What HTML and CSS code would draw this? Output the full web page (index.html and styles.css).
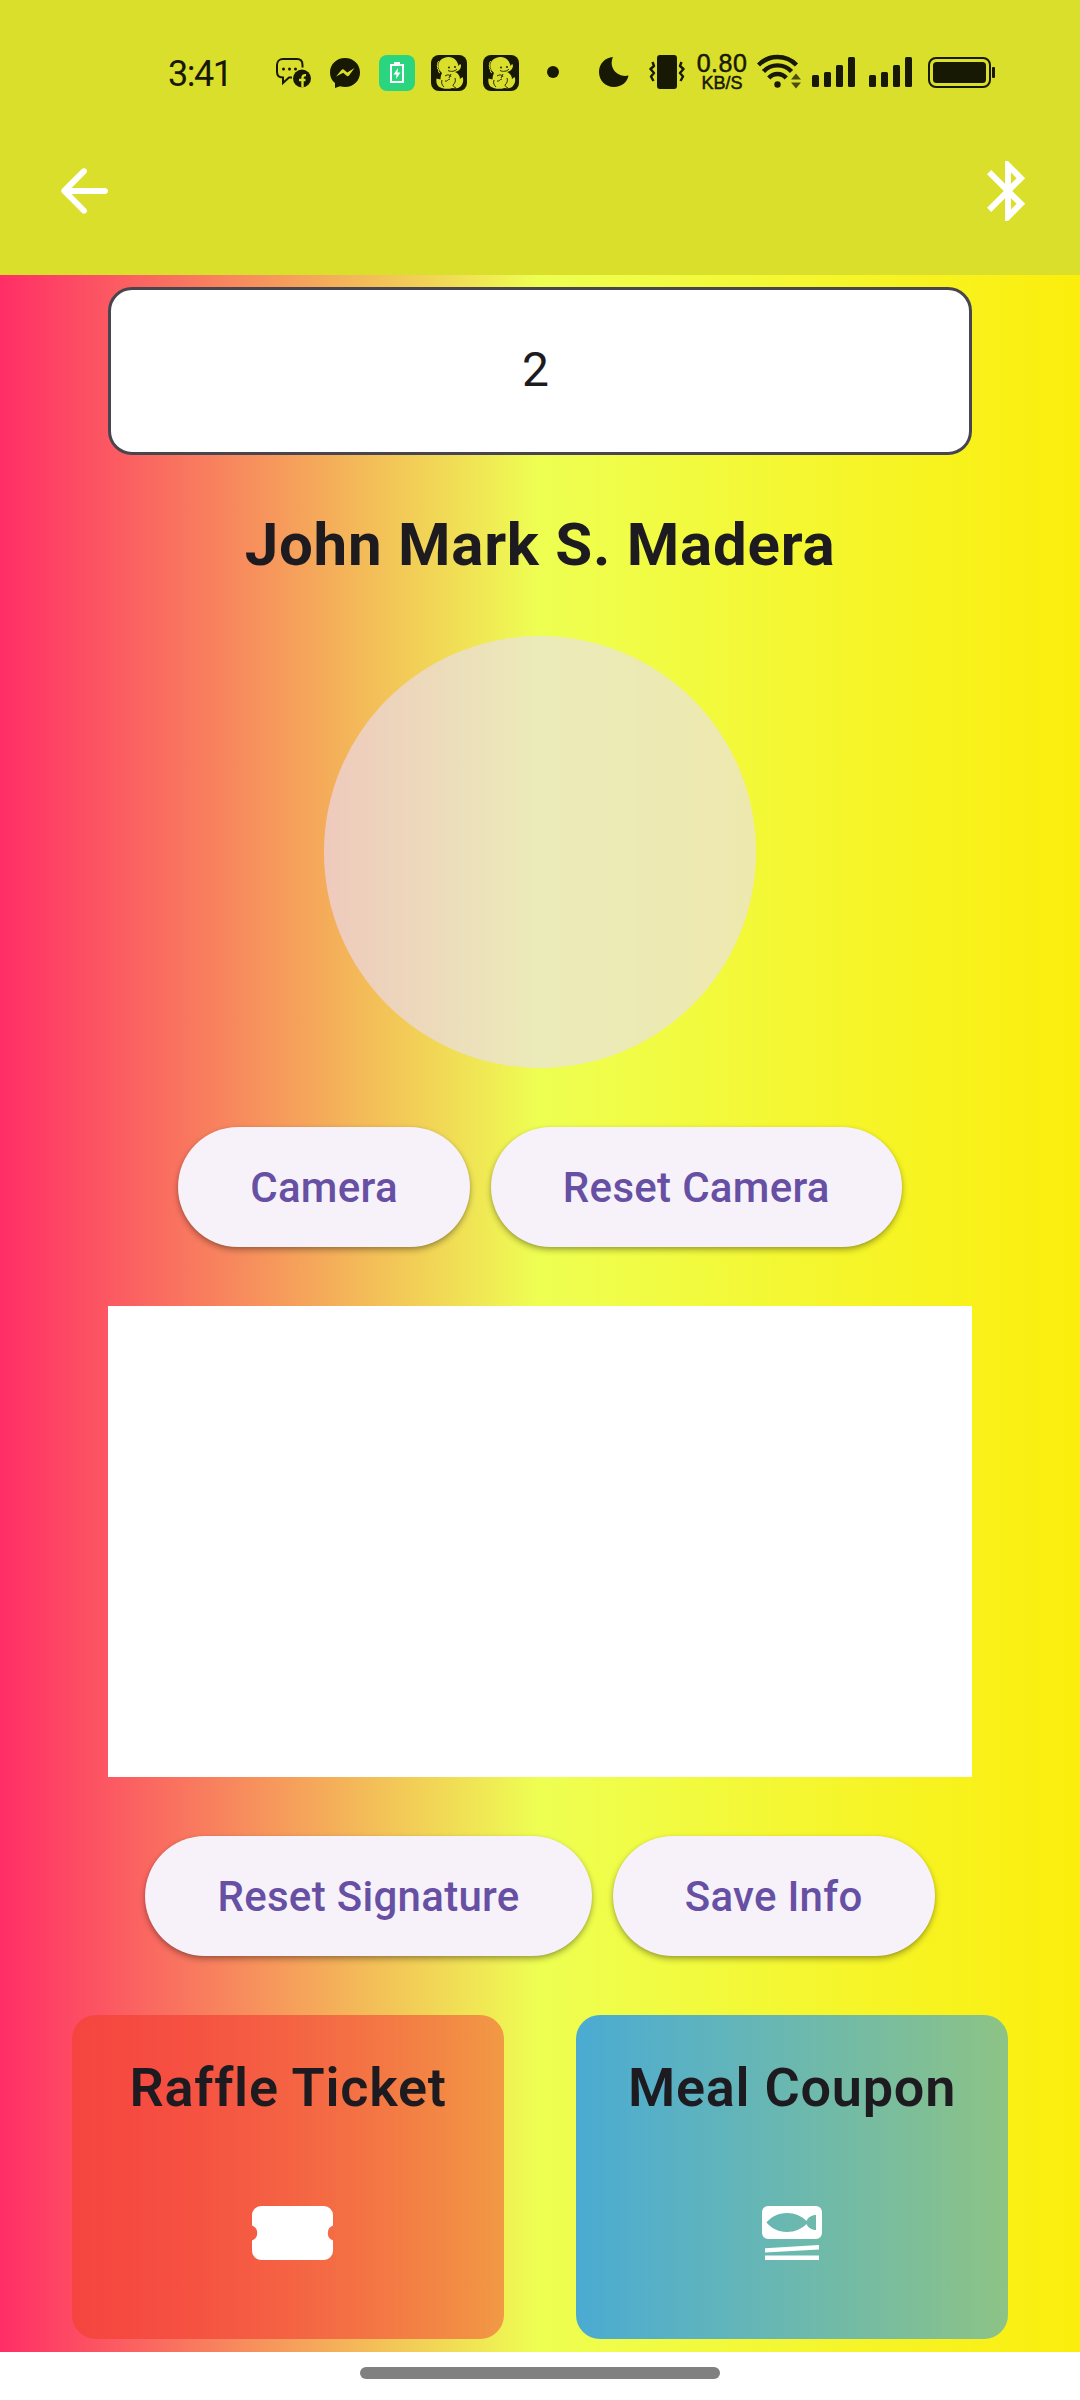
FILE: index.html
```html
<!DOCTYPE html>
<html lang="en">
<head>
<meta charset="utf-8">
<title>Guest info</title>
<link rel="stylesheet" href="styles.css">
</head>
<body>
<svg class="defs" width="0" height="0" aria-hidden="true">
  <symbol id="dino" viewBox="0 0 36 38">
    <rect x="0" y="1" width="36" height="36" rx="8" fill="#171904"/>
    <path fill="#dadf2b" d="M13 4C17 2 23 3 25.500 7c1 1.500 1.500 3 2 5l1.500-2 1 1c0 4-2 6-6 7 3 1 5 4 5 7l2.500-2c1.500 3 .5 7-2 9.500-2 2-5 2-8 1.500-5 1.500-10 1-14-1.500-2-2-2.500-5-2-8l4 1C9.500 23 10 21 11 19 7.500 16 6.500 12 8 8.500 9 6 10.500 5 13 4z"/>
    <path fill="none" stroke="#dadf2b" stroke-width="1" d="M8 7l-1.500 2 .5 1-1 2 1 1-.5 2 1.500 1-.5 2 1.500 1"/>
    <circle cx="18" cy="13.500" r=".9" fill="#171904"/><circle cx="24" cy="13" r=".9" fill="#171904"/>
    <path fill="none" stroke="#171904" stroke-width=".9" d="M17 16.500c3 1.500 7 1 9-1.500M14 22c3-2 5-1 6 1M14 27c2 1 3-2 5-2M20 20l-2 4M24 24c1 3 0 5-2 7 0 1 1 2 3 3M11 26c-1 3 0 5 2 7"/>
  </symbol>
  <symbol id="signal" viewBox="0 0 44 38">
    <g fill="#171904"><rect x="0" y="21" width="7" height="12" rx="1.500"/><rect x="12" y="18" width="7" height="15" rx="1.500"/><rect x="24" y="11" width="7" height="22" rx="1.500"/><rect x="36" y="3" width="7" height="30" rx="1.500"/></g>
  </symbol>
</svg>

<header class="top">
  <div class="status">
    <span class="time">3:41</span>
    <svg class="s-chat" width="36" height="38" viewBox="0 0 36 38">
      <path d="M26.500 13.500V11c0-3.500-2-6-5.500-6H7C3.500 5 1 7.500 1 11v7c0 3.500 2.500 5.500 6 5.500V29l6-5.500h3" fill="none" stroke="#171904" stroke-width="2"/>
      <g fill="#171904"><circle cx="7.500" cy="15" r="1.500"/><circle cx="13.500" cy="15" r="1.500"/><circle cx="19.500" cy="15" r="1.500"/><circle cx="26" cy="24.500" r="9"/></g>
      <path d="M26.500 33.500v-9.500c0-2 1-3 3.500-2.800M23 26h6.500" fill="none" stroke="#dadf2b" stroke-width="2.400"/>
    </svg>
    <svg class="s-msg" width="30" height="38" viewBox="0 0 30 38">
      <path d="M15 4C6.500 4 0 10.200 0 18.500c0 4.500 1.800 8 5 10.500v5l5-1.800c1.600.5 3.300.8 5 .8 8.500 0 15-6.200 15-14.500S23.500 4 15 4z" fill="#171904"/>
      <path d="M6 22.500l5.500-6.500c.8-.8 1.600-.8 2.400-.2l3.400 2.700L24.500 14l-5.500 7.500c-.8.8-1.600.8-2.400.2l-3.400-2.900z" fill="#dadf2b"/>
    </svg>
    <svg class="s-pow" width="36" height="38" viewBox="0 0 36 38">
      <rect y="1" width="36" height="36" rx="8" fill="#2bd47f"/>
      <rect x="12" y="11" width="12" height="17" fill="none" stroke="#fff" stroke-width="2"/><path d="M11 12v-2h4V8h6v2h4v2z" fill="#fff"/>
      <path d="M19 14l-4.500 6.500h3l-.5 4.500 4.500-6.500h-3z" fill="#fff"/>
    </svg>
    <svg class="s-dino" width="36" height="38"><use href="#dino"/></svg>
    <svg class="s-dino" width="36" height="38"><use href="#dino"/></svg>
    <svg class="s-dot" width="12" height="38" viewBox="0 0 12 38"><circle cx="6" cy="18" r="6" fill="#171904"/></svg>
    <svg class="s-moon" width="30" height="38" viewBox="0 0 30 38"><path d="M14 3C6 3.500 0 10 0 18c0 8.500 6.500 15 15 15 7.500 0 13.500-5 14.500-11.500C19 24 9 14 14 3z" fill="#171904"/></svg>
    <svg class="s-vib" width="36" height="38" viewBox="0 0 36 38">
      <rect x="8" y="1" width="20" height="34" rx="3" fill="#171904"/>
      <path d="M3.500 8L5 12l-3.500 3L5 19l-3 3.500L4.500 27M32.500 8L31 12l3.500 3L31 19l3 3.500-2.500 4.500" fill="none" stroke="#171904" stroke-width="2.400" stroke-linejoin="round"/>
    </svg>
    <div class="rate"><span class="rate-n">0.80</span><span class="rate-u">KB/S</span></div>
    <svg class="s-wifi" width="45" height="38" viewBox="0 0 45 38">
      <g fill="none" stroke="#171904" stroke-width="4.400"><path d="M1.500 11a26.500 26.500 0 0 1 38 0"/><path d="M6.500 17.500a19 19 0 0 1 28 0"/><path d="M11.800 24a11.500 11.500 0 0 1 17.400 0"/></g>
      <circle cx="20.500" cy="30.500" r="3.200" fill="#171904"/>
      <path d="M34 25.500l5-6 5 6zM34 28.500l5 6 5-6z" fill="#4b4d0c"/>
    </svg>
    <svg class="s-sig" width="44" height="38"><use href="#signal"/></svg>
    <svg class="s-sig2" width="44" height="38"><use href="#signal"/></svg>
    <svg class="s-bat" width="67" height="38" viewBox="0 0 67 38">
      <rect x="1" y="4" width="61" height="29" rx="7" fill="none" stroke="#171904" stroke-width="2"/><rect x="5" y="8" width="53" height="21" rx="3.500" fill="#171904"/><rect x="64" y="13" width="3" height="11" rx="1" fill="#171904"/>
    </svg>
  </div>
  <nav class="bar">
    <svg width="72" height="72" viewBox="0 0 24 24" fill="#fff"><path d="M19 11H7.830l4.880-4.880c.39-.39.39-1.030 0-1.420-.39-.39-1.020-.39-1.410 0l-6.590 6.590c-.39.39-.39 1.020 0 1.410l6.590 6.590c.39.39 1.020.39 1.410 0 .39-.39.39-1.020 0-1.410L7.830 13H19c.55 0 1-.45 1-1s-.45-1-1-1z"/></svg>
    <svg width="72" height="72" viewBox="0 0 24 24" fill="#fff"><path d="M17.710 7.710L12 2h-1v7.590L6.410 5 5 6.410 10.590 12 5 17.590 6.410 19 11 14.410V22h1l5.710-5.710-4.300-4.290 4.300-4.290zM13 5.830l1.880 1.880L13 9.590V5.830zm1.880 10.460L13 18.170v-3.760l1.880 1.880z"/></svg>
  </nav>
</header>

<main class="page">
  <div class="field">2</div>
  <h1 class="name">John Mark S. Madera</h1>
  <div class="avatar"></div>
  <div class="buttons first"><button class="btn">Camera</button><button class="btn">Reset Camera</button></div>
  <div class="pad"></div>
  <div class="buttons"><button class="btn">Reset Signature</button><button class="btn">Save Info</button></div>
  <div class="cards">
    <section class="card raffle">
      <h2>Raffle Ticket</h2>
      <svg class="ticket" width="81" height="54" viewBox="0 0 81 54"><path d="M9 0H72a9 9 0 0 1 9 9V19.500a8 8 0 0 0 0 15V45a9 9 0 0 1-9 9H9a9 9 0 0 1-9-9V34.500a8 8 0 0 0 0-15V9A9 9 0 0 1 9 0z" fill="#fff"/></svg>
    </section>
    <section class="card meal">
      <h2>Meal Coupon</h2>
      <svg width="60" height="54" viewBox="0 0 60 54" fill="#fff"><path fill-rule="evenodd" d="M6 0H54a6 6 0 0 1 6 6V27a6 6 0 0 1-6 6H6a6 6 0 0 1-6-6V6A6 6 0 0 1 6 0zM4.500 16.500C9 11 16 7 25 7c8 0 15 3.500 19.500 8C46 11.500 49.500 9 54 9V24c-4.500 0-8-2.500-9.500-6C40 22.500 33 26 25 26 16 26 9 22 4.500 16.500z"/><path d="M3 42.200L57 39v4.500L3 46.500zM3 49.500H57V54H3z"/></svg>
    </section>
  </div>
</main>
<footer class="home"><div class="handle"></div></footer>
</body>
</html>
```
FILE: styles.css
```css
* { box-sizing: border-box; }
body { margin: 0; width: 1080px; height: 2400px; background: #fff; font-family: Roboto, sans-serif; color: #1d1b20; overflow: hidden; }
svg { display: block; flex: none; }
.defs { position: absolute; }

.top { height: 275px; background: #dadf2b; }
.status { display: flex; align-items: center; height: 107px; padding: 39px 0 0 168px; color: #171904; }
.time { width: 62px; padding-top: 1px; font: 36px/38px Roboto, sans-serif; letter-spacing: -1.5px; white-space: nowrap; }
.s-chat { margin-left: 46px; }
.s-msg { margin-left: 18px; }
.s-pow { margin-left: 19px; }
.s-dino { margin-left: 16px; }
.s-dot { margin-left: 28px; }
.s-moon { margin-left: 40px; }
.s-vib { margin-left: 20px; }
.rate { display: flex; flex-direction: column; align-items: center; width: 54px; margin-left: 10px; font-family: "Liberation Sans", sans-serif; -webkit-text-stroke: .5px #171904; }
.rate-n { font-size: 25px; line-height: 20px; letter-spacing: .5px; }
.rate-u { font-size: 18px; line-height: 20px; }
.s-wifi { margin-left: 8px; }
.s-sig { margin-left: 10px; }
.s-sig2 { margin-left: 13px; }
.s-bat { margin-left: 15px; }
.bar { display: flex; align-items: center; justify-content: space-between; height: 168px; padding: 0 36px 0 48px; }

.page { display: flex; flex-direction: column; align-items: center; height: 2077px; padding-top: 12px; background: linear-gradient(90deg, #ff2e66, #eeff52 50%, #fbee0c); }
.field { display: flex; align-items: center; justify-content: center; width: 864px; height: 168px; padding: 0 9px 4px 0; border: 3px solid #49454f; border-radius: 24px; background: #fff; font-size: 48px; }
.name { margin: 54px 0 0; font-size: 60px; line-height: 72px; font-weight: 700; letter-spacing: .75px; }
.avatar { width: 432px; height: 432px; margin-top: 55px; border-radius: 50%; background: rgba(234, 221, 255, .6); }
.buttons { display: flex; gap: 21px; margin-top: 59px; }
.btn { height: 120px; padding: 2px 72px 0; border: 0; border-radius: 60px; background: #f7f2fa; box-shadow: 0 3px 6px rgba(0, 0, 0, .32), 0 1px 3px rgba(0, 0, 0, .08); color: #6750a4; font: 500 42px/60px Roboto, sans-serif; letter-spacing: .3px; }
.pad { width: 864px; height: 471px; margin-top: 59px; background: #fff; }
.cards { display: flex; gap: 72px; margin-top: 59px; }
.card { display: flex; flex-direction: column; align-items: center; width: 432px; height: 324px; padding-top: 37px; border-radius: 24px; }
.card h2 { margin: 0 0 82px; font-size: 54px; line-height: 72px; font-weight: 600; letter-spacing: .75px; white-space: nowrap; }
.ticket { margin-left: 9px; }
.raffle { background: linear-gradient(90deg, rgba(244, 67, 54, .8), rgba(244, 67, 54, .5)); }
.meal { background: linear-gradient(90deg, rgba(33, 150, 243, .8), rgba(33, 150, 243, .5)); }

.home { height: 48px; padding-top: 15px; }
.handle { width: 360px; height: 12px; margin: 0 auto; border-radius: 6px; background: #808080; }
```
